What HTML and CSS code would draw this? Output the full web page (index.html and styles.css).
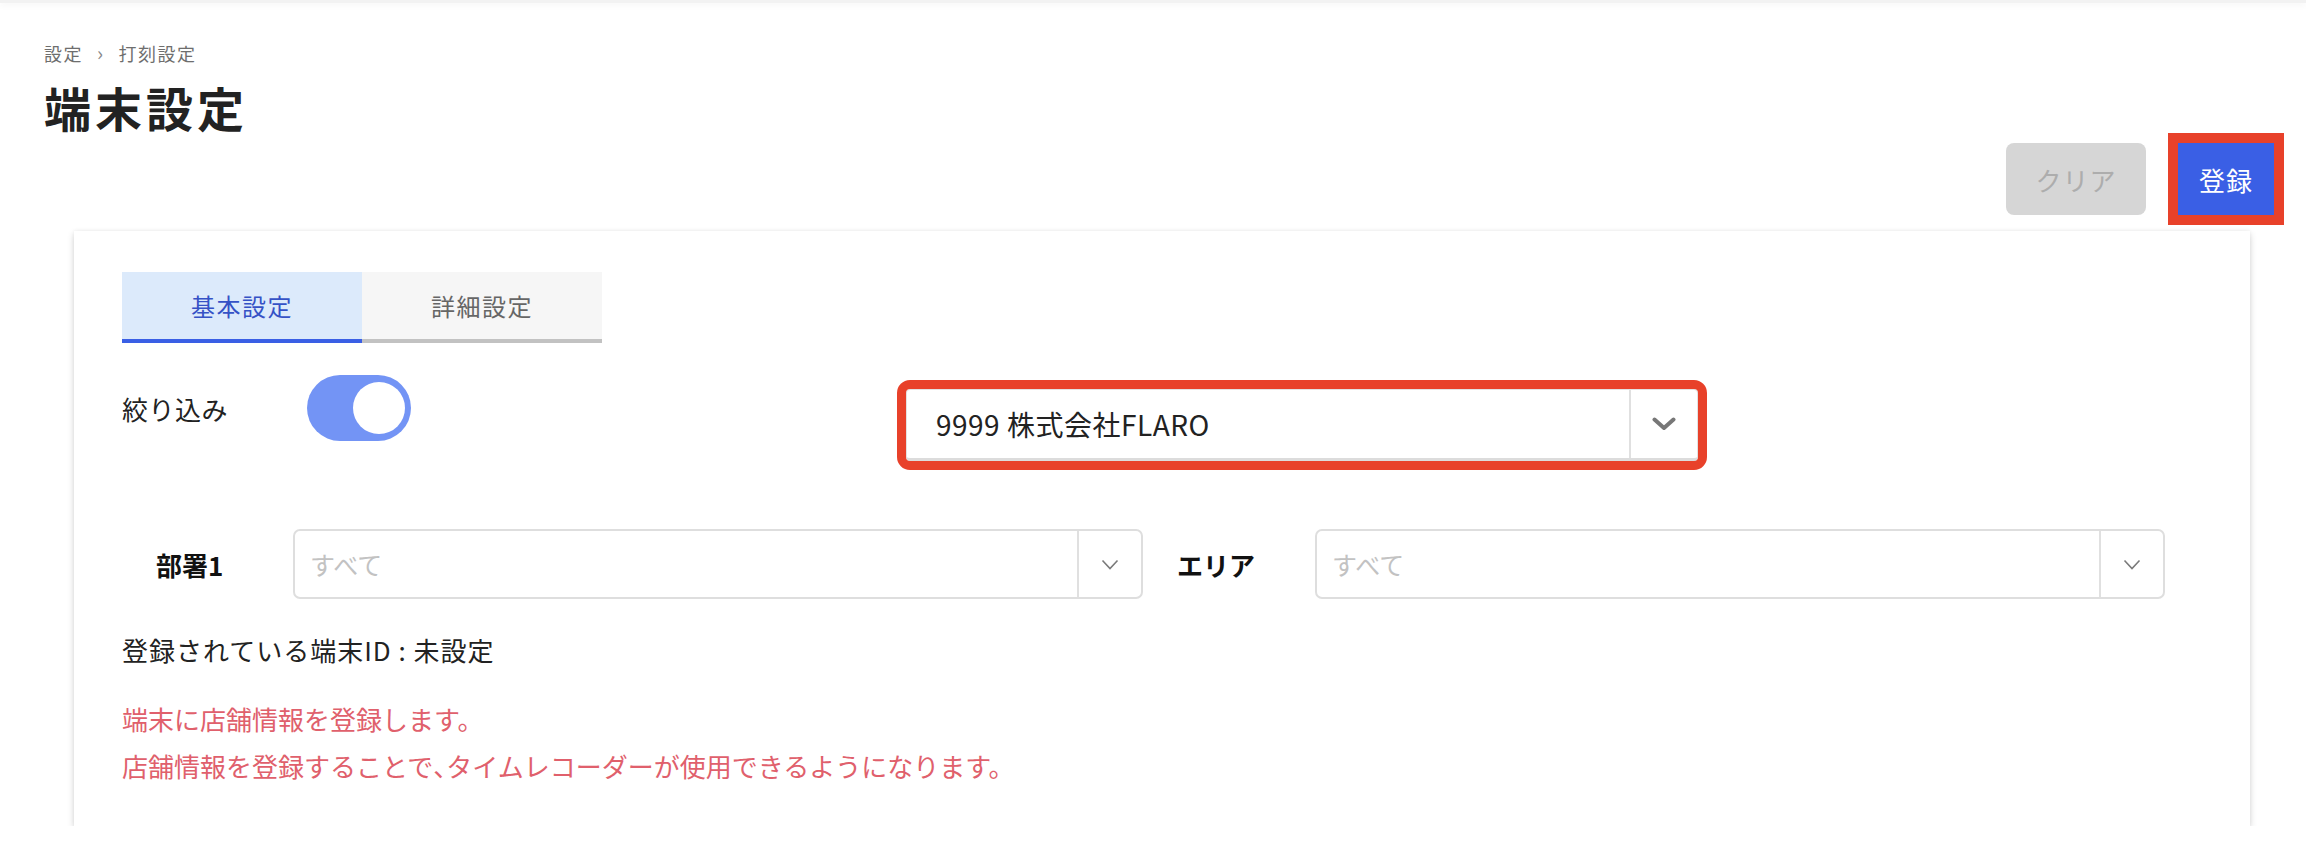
FILE: index.html
```html
<!DOCTYPE html>
<html lang="ja">
<head>
<meta charset="utf-8">
<title>端末設定</title>
<link rel="stylesheet" href="styles.css">
</head>
<body>
<div class="topbar"></div>
<main class="page">
  <header class="page-head">
    <nav class="breadcrumb">
      <span>設定</span>
      <span class="crumb-sep">›</span>
      <span>打刻設定</span>
    </nav>
    <h1 class="title">端末設定</h1>
  </header>

  <div class="actions">
    <button class="btn btn-clear" type="button">クリア</button>
    <button class="btn btn-submit" type="button">登録</button>
  </div>

  <section class="card">
    <div class="tabs">
      <div class="tab tab-active">基本設定</div>
      <div class="tab">詳細設定</div>
    </div>

    <div class="filter-row">
      <div class="filter-label">絞り込み</div>
      <div class="toggle"><span class="toggle-knob"></span></div>
      <div class="select select-company">
        <div class="select-value">9999 株式会社FLARO</div>
        <div class="select-arrow">
          <svg width="24" height="14" viewBox="0 0 24 14"><path d="M2.5 2.5 L12 11 L21.5 2.5" fill="none" stroke="#777" stroke-width="4" stroke-linecap="round" stroke-linejoin="round"/></svg>
        </div>
      </div>
    </div>

    <div class="field-row">
      <div class="field-label">部署1</div>
      <div class="select select-field">
        <div class="select-placeholder">すべて</div>
        <div class="select-arrow">
          <svg width="18" height="11" viewBox="0 0 18 11"><path d="M1.5 1.5 L9 9.5 L16.5 1.5" fill="none" stroke="#7a7a7a" stroke-width="1.6"/></svg>
        </div>
      </div>
      <div class="field-label field-label-area">エリア</div>
      <div class="select select-field">
        <div class="select-placeholder">すべて</div>
        <div class="select-arrow">
          <svg width="18" height="11" viewBox="0 0 18 11"><path d="M1.5 1.5 L9 9.5 L16.5 1.5" fill="none" stroke="#7a7a7a" stroke-width="1.6"/></svg>
        </div>
      </div>
    </div>

    <p class="terminal-id">登録されている端末ID : 未設定</p>

    <div class="notice">
      <p>端末に店舗情報を登録します。</p>
      <p>店舗情報を登録することで<span class="punct">、</span>タイムレコーダーが使用できるようになります。</p>
    </div>
  </section>
</main>
</body>
</html>
```

FILE: styles.css
```css
* {
  box-sizing: border-box;
}

body {
  margin: 0;
  background: #ffffff;
  font-family: "Noto Sans CJK JP", "Noto Sans", sans-serif;
  color: #222222;
}

.topbar {
  height: 3px;
  background: #f2f2f2;
  box-shadow: 0 2px 6px rgba(0, 0, 0, 0.06);
}

.page {
  padding: 0 0 0 44px;
}

.page-head {
  padding-top: 38px;
}

.breadcrumb {
  display: flex;
  align-items: center;
  gap: 14px;
  font-size: 18px;
  line-height: 24px;
  letter-spacing: 1.5px;
  color: #6e6e6e;
}

.crumb-sep {
  font-size: 20px;
  color: #888;
}

.title {
  margin: 12px 0 0;
  font-size: 47px;
  line-height: 60px;
  font-weight: 700;
  letter-spacing: 4px;
  color: #222;
}

.actions {
  display: flex;
  justify-content: flex-end;
  align-items: center;
  gap: 32px;
  padding-right: 32px;
  margin-top: 6px;
}

.btn {
  border: none;
  font-family: inherit;
  font-size: 26px;
  height: 72px;
  padding: 0;
  cursor: pointer;
}

.btn-clear {
  width: 140px;
  border-radius: 8px;
  background: #d6d6d6;
  color: #adadad;
  letter-spacing: 1px;
}

.btn-submit {
  width: 96px;
  background: #3a5fe5;
  color: #ffffff;
  outline: 10px solid #e8412a;
  letter-spacing: 1px;
}

.card {
  margin: 16px 56px 0 30px;
  background: #ffffff;
  box-shadow: 0 3px 7px rgba(0, 0, 0, 0.16), 0 0 4px rgba(0, 0, 0, 0.05);
  padding: 41px 48px 37px;
}

.tabs {
  display: flex;
}

.tab {
  width: 240px;
  height: 71px;
  display: flex;
  align-items: center;
  justify-content: center;
  font-size: 24px;
  letter-spacing: 1.5px;
  color: #666666;
  background: #f6f6f6;
  border-bottom: 4px solid #c2c2c2;
}

.tab-active {
  color: #3552c6;
  background: #dceafb;
  border-bottom-color: #3a5fe5;
}

.filter-row {
  display: flex;
  align-items: flex-start;
  margin-top: 32px;
}

.filter-label {
  width: 185px;
  font-size: 26px;
  line-height: 68px;
  letter-spacing: 0.5px;
  color: #222;
}

.toggle {
  position: relative;
  width: 104px;
  height: 66px;
  border-radius: 33px;
  background: #7394f5;
}

.toggle-knob {
  position: absolute;
  top: 7px;
  right: 6px;
  width: 52px;
  height: 52px;
  border-radius: 50%;
  background: #ffffff;
}

.select {
  display: flex;
  align-items: stretch;
  background: #ffffff;
}

.select-company {
  margin-left: 495px;
  margin-top: 14px;
  width: 792px;
  height: 72px;
  border: 1px solid #e2e2e2;
  border-bottom: 3px solid #dcdcdc;
  border-radius: 4px;
  outline: 9px solid #e8412a;
  outline-offset: 0;
}

.select-value {
  flex: 1;
  display: flex;
  align-items: center;
  padding-left: 29px;
  font-size: 28px;
  letter-spacing: 0.5px;
  color: #222;
}

.select-company .select-arrow {
  width: 68px;
  border-left: 2px solid #e0e0e0;
}

.select-arrow {
  display: flex;
  align-items: center;
  justify-content: center;
}

.field-row {
  display: flex;
  align-items: center;
  margin-top: 68px;
  padding-left: 34px;
}

.field-label {
  width: 137px;
  font-size: 26px;
  font-weight: 700;
  color: #111;
}

.field-label-area {
  width: 138px;
  margin-left: 34px;
}

.select-field {
  width: 850px;
  height: 70px;
  border: 2px solid #dedede;
  border-radius: 7px;
}

.select-placeholder {
  flex: 1;
  display: flex;
  align-items: center;
  padding-left: 15px;
  font-size: 25px;
  color: #c2c2c2;
}

.select-field .select-arrow {
  width: 64px;
  border-left: 2px solid #e0e0e0;
}

.terminal-id {
  margin: 31px 0 0;
  font-size: 26px;
  line-height: 40px;
  letter-spacing: 1px;
  color: #222;
}

.notice {
  margin-top: 25px;
  color: #e0606c;
  font-size: 26px;
  line-height: 47px;
}

.notice p {
  margin: 0;
}

.punct {
  letter-spacing: -13px;
}
```
